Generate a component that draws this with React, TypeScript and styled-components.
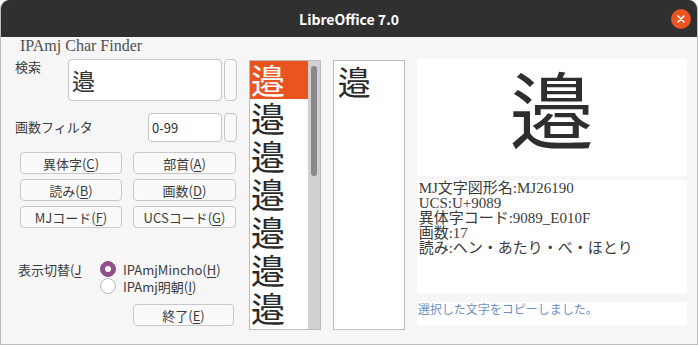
import React from 'react';
import styled, { createGlobalStyle } from 'styled-components';

const GlobalStyle = createGlobalStyle`
    html, body {
        margin: 0;
        padding: 0;
        background: #ffffff;
    }
    * {
        box-sizing: border-box;
    }
`;

const uiFont = `"Noto Sans CJK JP", "Open Sans", sans-serif`;
const serifFont = `"Liberation Serif", "Noto Sans CJK JP", serif`;

const Window = styled.div`
    width: 698px;
    height: 345px;
    display: flex;
    flex-direction: column;
    background: #f6f6f6;
    border: 1px solid #bcbcbc;
    border-top: none;
    border-radius: 9px 9px 0 0;
    overflow: hidden;
    font-family: ${uiFont};
`;

const TitleBar = styled.div`
    height: 37px;
    flex: none;
    background: #303030;
    display: flex;
    align-items: center;
    justify-content: center;
    position: relative;
    color: #ffffff;
    font: bold 14px ${uiFont};
`;

const CloseButton = styled.div`
    position: absolute;
    right: 6px;
    top: 9px;
    width: 20px;
    height: 20px;
    border-radius: 50%;
    background: #e95420;
    display: flex;
    align-items: center;
    justify-content: center;
`;

const Body = styled.div`
    flex: 1;
    display: flex;
    flex-direction: column;
    padding: 0 10px 0 14px;
`;

const FrameLabel = styled.div`
    height: 22px;
    line-height: 22px;
    padding-left: 5px;
    font: 16px ${serifFont};
    color: #505050;
`;

const Content = styled.div`
    display: flex;
    gap: 12px;
    align-items: flex-start;
`;

const LeftColumn = styled.div`
    width: 222px;
    display: flex;
    flex-direction: column;
`;

const FieldRow = styled.div<{ $mt: number }>`
    display: flex;
    align-items: flex-start;
    margin-top: ${p => p.$mt}px;
`;

const FieldLabel = styled.div<{ $w: number; $pt: number }>`
    width: ${p => p.$w}px;
    padding-top: ${p => p.$pt}px;
    font-size: 13px;
    line-height: 16px;
    color: #3c3c3c;
    flex: none;
`;

const TextBox = styled.div<{ $w: number; $h: number; $size: number }>`
    width: ${p => p.$w}px;
    height: ${p => p.$h}px;
    background: #ffffff;
    border: 1px solid #c4c4c4;
    border-radius: 4px;
    display: flex;
    align-items: center;
    padding-left: 3px;
    font-size: ${p => p.$size}px;
    color: #333;
`;

const SpinBox = styled.div<{ $h: number }>`
    width: 13px;
    height: ${p => p.$h}px;
    margin-left: 2px;
    background: #f9f9f9;
    border: 1px solid #c4c4c4;
    border-radius: 4px;
`;

const ButtonGrid = styled.div`
    margin: 10px 0 0 5px;
    display: grid;
    grid-template-columns: 102px 103px;
    column-gap: 11px;
    row-gap: 5px;
`;

const PushButton = styled.div<{ $w?: number }>`
    width: ${p => (p.$w ? `${p.$w}px` : 'auto')};
    height: 22px;
    background: #fafafa;
    border: 1px solid #c8c8c8;
    border-radius: 4px;
    display: flex;
    align-items: center;
    justify-content: center;
    font-size: 13px;
    color: #3c3c3c;
    u {
        text-decoration: underline;
        text-underline-offset: 2px;
    }
`;

const ToggleRow = styled.div`
    display: flex;
    margin-top: 33px;
    padding-left: 3px;
`;

const ToggleLabel = styled.div`
    width: 82px;
    padding-top: 1px;
    font-size: 13px;
    line-height: 16px;
    color: #3c3c3c;
    u { text-underline-offset: 2px; }
`;

const RadioGroup = styled.div`
    display: flex;
    flex-direction: column;
    gap: 1px;
`;

const RadioRow = styled.div`
    display: flex;
    align-items: center;
    gap: 7px;
    height: 16px;
    font-size: 13px;
    color: #3c3c3c;
    u { text-underline-offset: 2px; }
`;

const RadioDot = styled.div<{ $on?: boolean }>`
    width: 16px;
    height: 16px;
    border-radius: 50%;
    background: ${p => (p.$on ? '#924d8b' : '#ffffff')};
    border: 1px solid ${p => (p.$on ? '#924d8b' : '#b8b8b8')};
    display: flex;
    align-items: center;
    justify-content: center;
    &:after {
        content: '';
        width: 6px;
        height: 6px;
        border-radius: 50%;
        background: ${p => (p.$on ? '#ffffff' : 'transparent')};
    }
`;

const ExitRow = styled.div`
    display: flex;
    justify-content: flex-end;
    margin-top: 10px;
    padding-right: 3px;
`;

const ListBox = styled.div`
    width: 72px;
    height: 270px;
    margin-top: 1px;
    background: #ffffff;
    border: 1px solid #bdbdbd;
    display: flex;
    overflow: hidden;
`;

const ListItems = styled.div`
    flex: 1;
    display: flex;
    flex-direction: column;
`;

const ListItem = styled.div<{ $sel?: boolean }>`
    height: 38px;
    flex: none;
    line-height: 38px;
    padding-left: 1px;
    font-size: 34px;
    color: ${p => (p.$sel ? '#ffffff' : '#2a2a2a')};
    background: ${p => (p.$sel ? '#e95420' : 'transparent')};
`;

const ScrollTrack = styled.div`
    width: 12px;
    background: #d0d0d0;
    padding: 5px 3px 0;
`;

const ScrollThumb = styled.div`
    width: 6px;
    height: 110px;
    border-radius: 3px;
    background: #8a8a8a;
`;

const SingleItem = styled.div`
    padding: 2px 0 0 4px;
    font-size: 33px;
    line-height: 36px;
    color: #2a2a2a;
`;

const RightColumn = styled.div`
    width: 271px;
    display: flex;
    flex-direction: column;
`;

const Panel = styled.div<{ $h: number; $mt: number }>`
    height: ${p => p.$h}px;
    margin-top: ${p => p.$mt}px;
    background: #ffffff;
`;

const BigChar = styled(Panel)`
    display: flex;
    justify-content: center;
    font-size: 84px;
    line-height: 96px;
    color: #2e2e2e;
`;

const InfoText = styled(Panel)`
    padding: 1px 0 0 2px;
    font: 15px/15px ${serifFont};
    color: #3a3a3a;
`;

const StatusText = styled(Panel)`
    padding: 0 0 0 1px;
    font: 12px/16px ${serifFont};
    color: #6f8fc0;
`;

const KANJI = '邉';
const listChars = Array.from({ length: 7 });

export default function App() {
    return (
        <>
            <GlobalStyle />
            <Window>
                <TitleBar>
                    LibreOffice 7.0
                    <CloseButton>
                        <svg width="10" height="10" viewBox="0 0 10 10">
                            <path d="M2 2 L8 8 M8 2 L2 8" stroke="#fff" strokeWidth="1.6" strokeLinecap="round" />
                        </svg>
                    </CloseButton>
                </TitleBar>
                <Body>
                    <FrameLabel>IPAmj Char Finder</FrameLabel>
                    <Content>
                        <LeftColumn>
                            <FieldRow $mt={0}>
                                <FieldLabel $w={53} $pt={0}>検索</FieldLabel>
                                <TextBox $w={154} $h={42} $size={23}>{KANJI}</TextBox>
                                <SpinBox $h={42} />
                            </FieldRow>
                            <FieldRow $mt={12}>
                                <FieldLabel $w={133} $pt={6}>画数フィルタ</FieldLabel>
                                <TextBox $w={74} $h={29} $size={13}>0-99</TextBox>
                                <SpinBox $h={29} />
                            </FieldRow>
                            <ButtonGrid>
                                <PushButton>異体字(<u>C</u>)</PushButton>
                                <PushButton>部首(<u>A</u>)</PushButton>
                                <PushButton>読み(<u>B</u>)</PushButton>
                                <PushButton>画数(<u>D</u>)</PushButton>
                                <PushButton>MJコード(<u>F</u>)</PushButton>
                                <PushButton>UCSコード(<u>G</u>)</PushButton>
                            </ButtonGrid>
                            <ToggleRow>
                                <ToggleLabel>表示切替(<u>J</u></ToggleLabel>
                                <RadioGroup>
                                    <RadioRow>
                                        <RadioDot $on />
                                        <span>IPAmjMincho(<u>H</u>)</span>
                                    </RadioRow>
                                    <RadioRow>
                                        <RadioDot />
                                        <span>IPAmj明朝(<u>I</u>)</span>
                                    </RadioRow>
                                </RadioGroup>
                            </ToggleRow>
                            <ExitRow>
                                <PushButton $w={101}>終了(<u>E</u>)</PushButton>
                            </ExitRow>
                        </LeftColumn>
                        <ListBox>
                            <ListItems>
                                {listChars.map((_, i) => (
                                    <ListItem key={i} $sel={i === 0}>{KANJI}</ListItem>
                                ))}
                            </ListItems>
                            <ScrollTrack>
                                <ScrollThumb />
                            </ScrollTrack>
                        </ListBox>
                        <ListBox>
                            <SingleItem>{KANJI}</SingleItem>
                        </ListBox>
                        <RightColumn>
                            <BigChar $h={117} $mt={0}>{KANJI}</BigChar>
                            <InfoText $h={113} $mt={4}>
                                MJ文字図形名:MJ26190<br />
                                UCS:U+9089<br />
                                異体字コード:9089_E010F<br />
                                画数:17<br />
                                読み:ヘン・あたり・べ・ほとり
                            </InfoText>
                            <StatusText $h={23} $mt={9}>選択した文字をコピーしました。</StatusText>
                        </RightColumn>
                    </Content>
                </Body>
            </Window>
        </>
    );
}
